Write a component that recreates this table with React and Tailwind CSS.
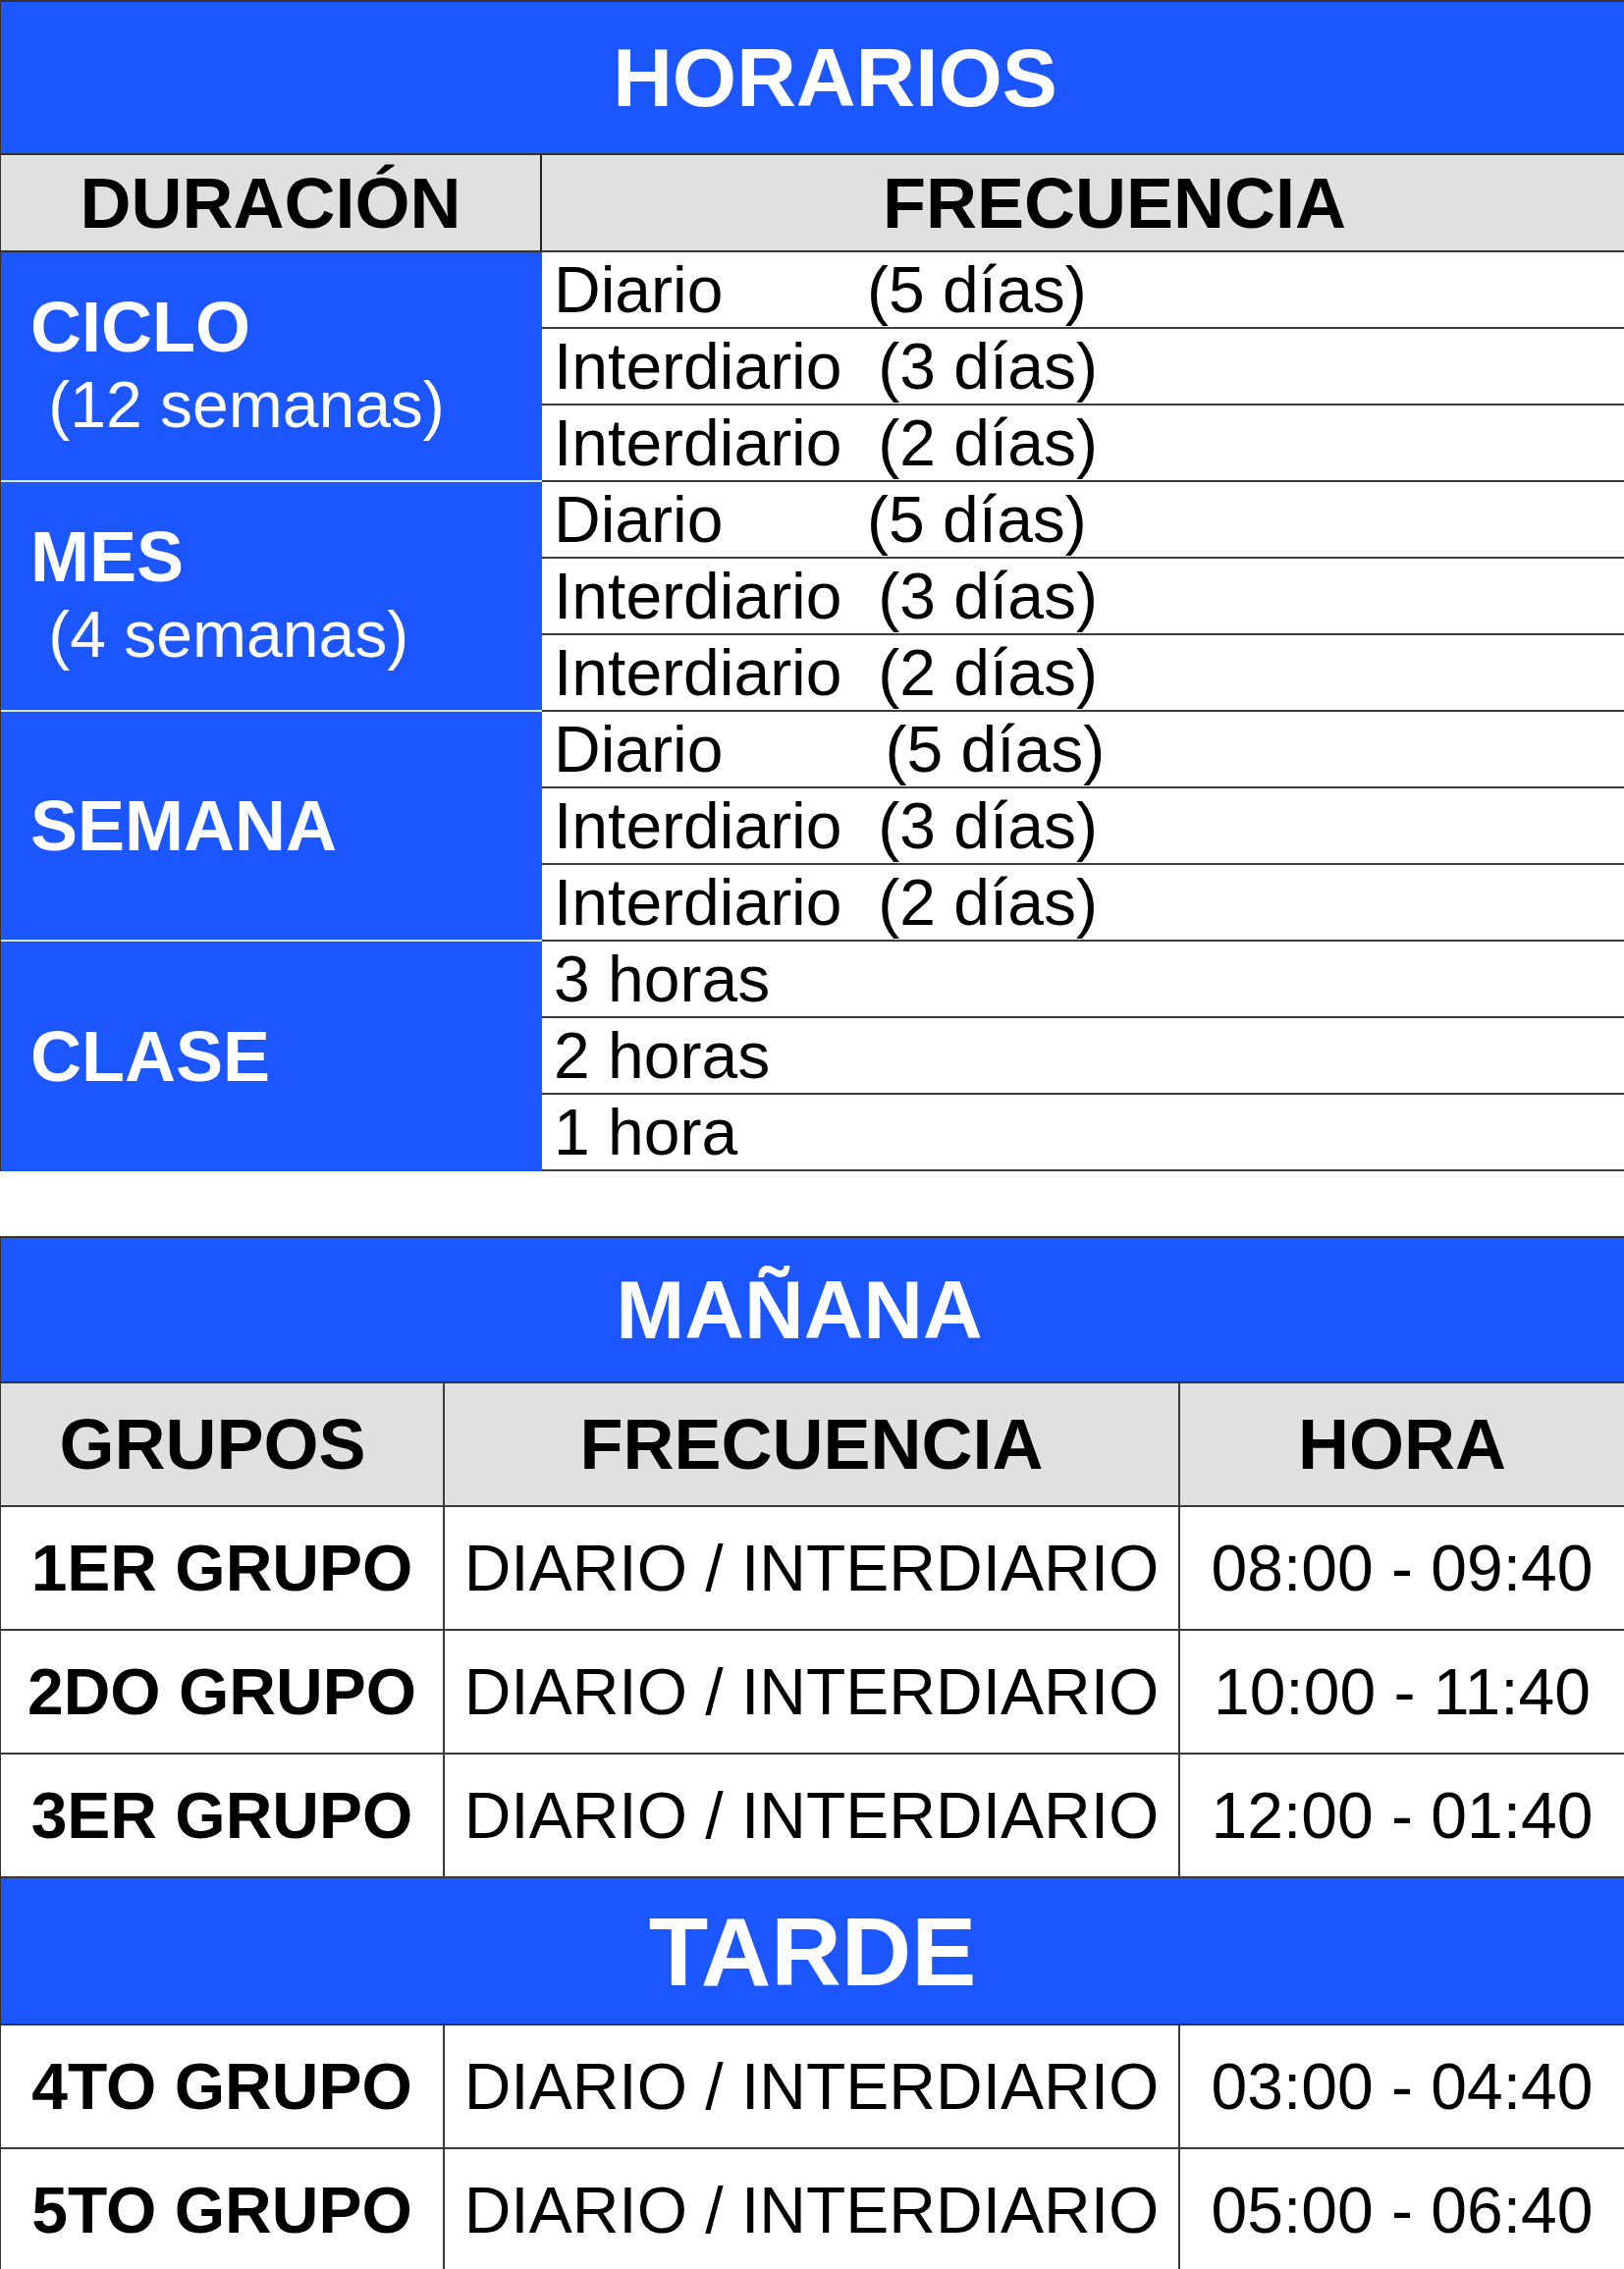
import React from 'react';

const font = "font-['Liberation_Sans',Arial,Helvetica,sans-serif]";

const groups = [
  {
    title: 'CICLO',
    sub: ' (12 semanas)',
    rows: ['Diario        (5 días)', 'Interdiario  (3 días)', 'Interdiario  (2 días)'],
  },
  {
    title: 'MES',
    sub: ' (4 semanas)',
    rows: ['Diario        (5 días)', 'Interdiario  (3 días)', 'Interdiario  (2 días)'],
  },
  {
    title: 'SEMANA',
    rows: ['Diario         (5 días)', 'Interdiario  (3 días)', 'Interdiario  (2 días)'],
  },
  {
    title: 'CLASE',
    rows: ['3 horas', '2 horas', '1 hora'],
  },
];

const manana = [
  { grupo: '1ER GRUPO', hora: '08:00 - 09:40' },
  { grupo: '2DO GRUPO', hora: '10:00 - 11:40' },
  { grupo: '3ER GRUPO', hora: '12:00 - 01:40' },
];

const tarde = [
  { grupo: '4TO GRUPO', hora: '03:00 - 04:40' },
  { grupo: '5TO GRUPO', hora: '05:00 - 06:40' },
];

const GroupRow = ({ grupo, hora }) => (
  <div className="flex h-[126px] border-b-2 border-[#3a3a3a] bg-white text-black">
    <div className="flex w-[452px] shrink-0 items-center justify-center border-r-2 border-[#3a3a3a] text-[66px] font-bold leading-none">
      {grupo}
    </div>
    <div className="flex w-[749px] shrink-0 items-center justify-center border-r-2 border-[#3a3a3a] text-[66px] leading-none">
      DIARIO / INTERDIARIO
    </div>
    <div className="flex flex-1 items-center justify-center text-[66px] leading-none">
      {hora}
    </div>
  </div>
);

export default function App() {
  return (
    <div className={`w-[1654px] bg-white ${font}`}>
      {/* Horarios */}
      <section className="border-l border-t-2 border-[#333]">
        <div className="flex h-[156px] items-center justify-center border-b-2 border-[#333] bg-[#1b56ff] pl-[46px] text-[84px] font-bold leading-none text-white">
          HORARIOS
        </div>
        <div className="flex h-[99px] border-b-2 border-[#333] bg-[#e0e0e0] text-black">
          <div className="flex w-[551px] shrink-0 items-center justify-center border-r-2 border-[#222] text-[72px] font-bold leading-none">
            DURACIÓN
          </div>
          <div className="flex flex-1 items-center justify-center pl-[64px] text-[72px] font-bold leading-none">
            FRECUENCIA
          </div>
        </div>
        {groups.map((g, i) => (
          <div key={g.title} className="flex">
            <div
              className={`flex h-[234px] w-[551px] shrink-0 flex-col justify-center bg-[#1b56ff] pl-[30px] text-white ${
                i < groups.length - 1 ? 'border-b-2 border-[#dce5ff]' : ''
              }`}
            >
              <div className="text-[72px] font-bold leading-[79px]">{g.title}</div>
              {g.sub && <div className="whitespace-pre text-[66px] leading-[79px]">{g.sub}</div>}
            </div>
            <div className="flex flex-1 flex-col">
              {g.rows.map((r, j) => (
                <div
                  key={j}
                  className="flex h-[78px] items-center whitespace-pre border-b-2 border-[#3c3c3c] pl-[12px] text-[66px] leading-none text-black"
                >
                  {r}
                </div>
              ))}
            </div>
          </div>
        ))}
      </section>

      {/* Mañana / Tarde */}
      <section className="mt-[66px] border-l border-t-2 border-[#333]">
        <div className="flex h-[148px] items-center justify-center border-b-2 border-[#333] bg-[#1b56ff] pr-[27px] text-[84px] font-bold leading-none text-white">
          MAÑANA
        </div>
        <div className="flex h-[126px] border-b-2 border-[#3a3a3a] bg-[#e0e0e0] text-black">
          <div className="flex w-[452px] shrink-0 items-center justify-center border-r-2 border-[#3a3a3a] pr-[19px] text-[72px] font-bold leading-none">
            GRUPOS
          </div>
          <div className="flex w-[749px] shrink-0 items-center justify-center border-r-2 border-[#3a3a3a] text-[72px] font-bold leading-none">
            FRECUENCIA
          </div>
          <div className="flex flex-1 items-center justify-center text-[72px] font-bold leading-none">
            HORA
          </div>
        </div>
        {manana.map((r) => (
          <GroupRow key={r.grupo} {...r} />
        ))}
        <div className="flex h-[150px] items-center justify-center border-b-2 border-[#2a3550] bg-[#1b56ff] text-[99px] font-bold leading-none text-white">
          TARDE
        </div>
        {tarde.map((r) => (
          <GroupRow key={r.grupo} {...r} />
        ))}
      </section>
    </div>
  );
}
